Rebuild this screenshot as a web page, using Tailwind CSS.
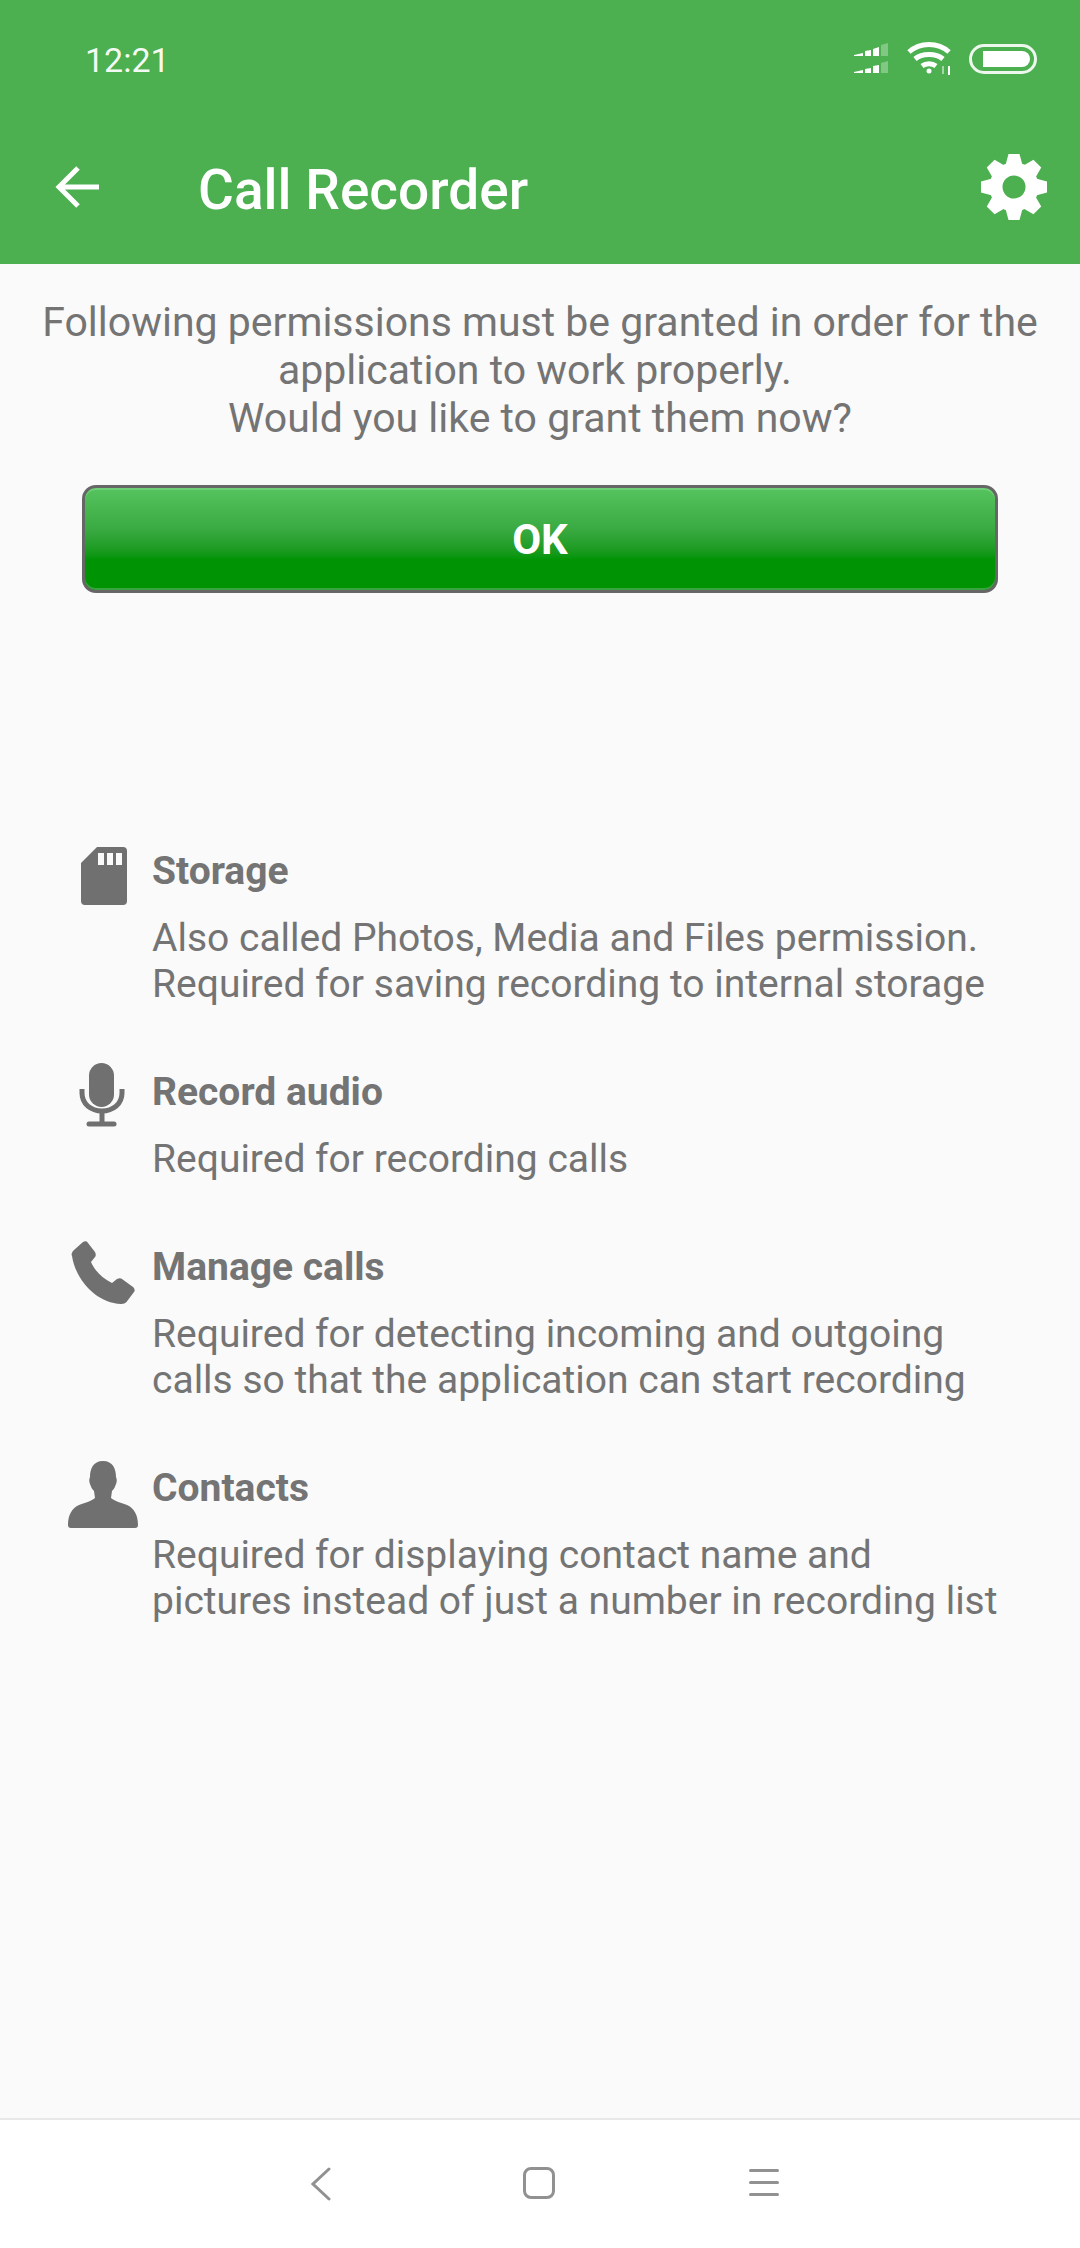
<!DOCTYPE html>
<html>
<head>
    <meta charset="UTF-8">
    <meta name="viewport" content="width=device-width, initial-scale=1.0">
    <title>Call Recorder</title>
    <script src="https://cdn.jsdelivr.net/npm/@tailwindcss/browser@4"></script>
</head>
<body class="w-[1080px] h-[2248px] bg-[#fafafa] flex flex-col overflow-hidden font-['Roboto',sans-serif]">
    <!-- status bar + toolbar -->
    <header class="h-[264px] shrink-0 bg-[#4caf50] text-white">
        <div class="h-[118px] pl-[85px] pr-[43px] pt-[39px] flex justify-between items-start">
            <span class="text-[34px] leading-[42px] text-white/95">12:21</span>
            <div class="flex items-center gap-[16px] pt-[3px]">
                <svg width="38" height="32" viewBox="0 0 38 32" fill="#fff">
                    <path d="M1 12l9-2v3H1zM12 8l6-1v6h-6zM20 6l6-2v9h-6z"/>
                    <path d="M28 2l7-2v13h-7z" opacity=".3"/>
                    <path d="M1 29l9-2v3H1zM12 26l6-1v5h-6zM20 23l6-1v8h-6z"/>
                    <path d="M28 20l7-2v12h-7z" opacity=".3"/>
                </svg>
                <svg width="46" height="34" viewBox="0 0 46 34" fill="none" stroke="#fff" stroke-width="5">
                    <path d="M2 10c11-10 29-10 40 0"/>
                    <path d="M8 17c7-6 21-6 28 0"/>
                    <path d="M15 24c4-3 10-3 14 0"/>
                    <circle cx="22" cy="29" r="2.5" fill="#fff" stroke="none"/>
                    <path d="M36 32v-8" stroke-width="2" opacity=".5"/>
                    <path d="M42 33v-9" stroke-width="2"/>
                </svg>
                <div class="w-[68px] h-[30px] rounded-full border-[3px] border-white/90 p-[4px] pl-[11px]">
                    <div class="w-full h-full bg-white rounded-r-full"></div>
                </div>
            </div>
        </div>
        <div class="h-[146px] flex items-center">
            <svg class="ml-[55px] mb-[8px]" width="44" height="44" viewBox="0 0 44 44" fill="none" stroke="#fff" stroke-width="5">
                <path d="M44 22H4M23 3L4 22l19 19"/>
            </svg>
            <h1 class="ml-[99px] mb-[2px] text-[55px] leading-[60px] font-medium">Call Recorder</h1>
            <svg class="ml-auto mr-[33px] mb-[8px]" width="66" height="66" viewBox="0 0 66 66" fill="#fff">
                <circle cx="33" cy="33" r="18" fill="none" stroke="#fff" stroke-width="13"/>
                <path d="M27.500 0h11l3.500 13h-18z"/>
                <path d="M27.500 0h11l3.500 13h-18z" transform="rotate(45 33 33)"/>
                <path d="M27.500 0h11l3.500 13h-18z" transform="rotate(90 33 33)"/>
                <path d="M27.500 0h11l3.500 13h-18z" transform="rotate(135 33 33)"/>
                <path d="M27.500 0h11l3.500 13h-18z" transform="rotate(180 33 33)"/>
                <path d="M27.500 0h11l3.500 13h-18z" transform="rotate(225 33 33)"/>
                <path d="M27.500 0h11l3.500 13h-18z" transform="rotate(270 33 33)"/>
                <path d="M27.500 0h11l3.500 13h-18z" transform="rotate(315 33 33)"/>
            </svg>
        </div>
    </header>

    <main class="flex-1 text-[#747474]">
        <p class="mt-[34px] text-center text-[41px] leading-[48px]">Following permissions must be granted in order for the<br>application to work properly.&nbsp;<br>Would you like to grant them now?</p>

        <button class="block ml-[82px] mt-[43px] w-[916px] h-[108px] rounded-[14px] border-[3px] border-[#666] bg-linear-to-b from-[#55c45e] via-[#3aaa42] via-40% to-[#009405] to-70% shadow-[inset_0_2px_0_#6fcf76,inset_0_-2px_0_#3aa53f] text-white text-[42px] font-bold">OK</button>

        <div class="mt-[255px] flex flex-col gap-[62px]">
            <section class="flex">
                <div class="w-[152px] shrink-0 flex justify-end pr-[25px]">
                    <svg class="-mt-[1px]" width="46" height="58" viewBox="0 0 46 58" fill="#707070">
                        <path fill-rule="evenodd" d="M16 0h26a4 4 0 0 1 4 4v50a4 4 0 0 1-4 4H4a4 4 0 0 1-4-4V16zM17 6v12h6V6zM26 6v12h6V6zM35 6v12h6V6z"/>
                    </svg>
                </div>
                <div>
                    <h2 class="text-[39px] leading-[46px] font-bold mb-[21px]">Storage</h2>
                    <p class="text-[39px] leading-[46px]">Also called Photos, Media and Files permission.<br>Required for saving recording to internal storage</p>
                </div>
            </section>
            <section class="flex">
                <div class="w-[152px] shrink-0 flex justify-end pr-[27px]">
                    <svg class="-mt-[6px]" width="46" height="64" viewBox="0 0 46 64" fill="none">
                        <rect x="10" y="0" width="25" height="44" rx="12.5" fill="#707070"/>
                        <path d="M3 26v4c0 11 9 18 20 18s20-7 20-18v-4" stroke="#707070" stroke-width="5"/>
                        <path d="M23 48v12" stroke="#707070" stroke-width="5"/>
                        <path d="M10 61h25" stroke="#707070" stroke-width="5" stroke-linecap="round"/>
                    </svg>
                </div>
                <div>
                    <h2 class="text-[39px] leading-[46px] font-bold mb-[21px]">Record audio</h2>
                    <p class="text-[39px] leading-[46px]">Required for recording calls</p>
                </div>
            </section>
            <section class="flex">
                <div class="w-[152px] shrink-0 flex justify-end pr-[15px]">
                    <svg class="-mt-[3px]" width="66" height="66" viewBox="0 0 66 66" fill="#707070">
                        <path d="M12 1c2-1 4-1 5 1l7 9c1 2 1 4 0 5l-4 5c4 9 11 16 21 21l5-4c2-1 4-1 5 0l11 8c2 2 2 4 1 5l-6 8c-2 3-4 4-7 4C26 62 5 40 1 15c-1-2 0-4 2-6z"/>
                    </svg>
                </div>
                <div>
                    <h2 class="text-[39px] leading-[46px] font-bold mb-[21px]">Manage calls</h2>
                    <p class="text-[39px] leading-[46px]">Required for detecting incoming and outgoing<br>calls so that the application can start recording</p>
                </div>
            </section>
            <section class="flex">
                <div class="w-[152px] shrink-0 flex justify-end pr-[14px]">
                    <svg class="-mt-[4px]" width="70" height="67" viewBox="0 0 70 67" fill="#707070">
                        <path d="M35 0c10 0 13 8 13 16 1 2 1 5 0 7-1 3-2 5-4 7l-1 7c3 3 11 5 16 7 7 3 11 10 11 20 0 2-1 3-3 3H3c-2 0-3-1-3-3 0-10 4-17 11-20 5-2 13-4 16-7l-1-7c-2-2-3-4-4-7-1-2-1-5 0-7C22 8 25 0 35 0z"/>
                    </svg>
                </div>
                <div>
                    <h2 class="text-[39px] leading-[46px] font-bold mb-[21px]">Contacts</h2>
                    <p class="text-[39px] leading-[46px]">Required for displaying contact name and<br>pictures instead of just a number in recording list</p>
                </div>
            </section>
        </div>
    </main>

    <!-- nav bar -->
    <nav class="h-[130px] shrink-0 bg-white border-t-[2px] border-[#e8e8e8] relative flex items-start">
        <svg class="ml-[311px] mt-[47px]" width="20" height="34" viewBox="0 0 20 34" fill="none" stroke="#919191" stroke-width="3" stroke-linecap="round"><path d="M18 2L2 17l16 15"/></svg>
        <div class="ml-[192px] mt-[47px] w-[32px] h-[32px] rounded-[8px] border-[3px] border-[#919191]"></div>
        <div class="ml-[194px] mt-[49px] w-[30px] flex flex-col gap-[9px]">
            <div class="h-[3px] bg-[#919191] rounded"></div>
            <div class="h-[3px] bg-[#919191] rounded"></div>
            <div class="h-[3px] bg-[#919191] rounded"></div>
        </div>
    </nav>
</body>
</html>
